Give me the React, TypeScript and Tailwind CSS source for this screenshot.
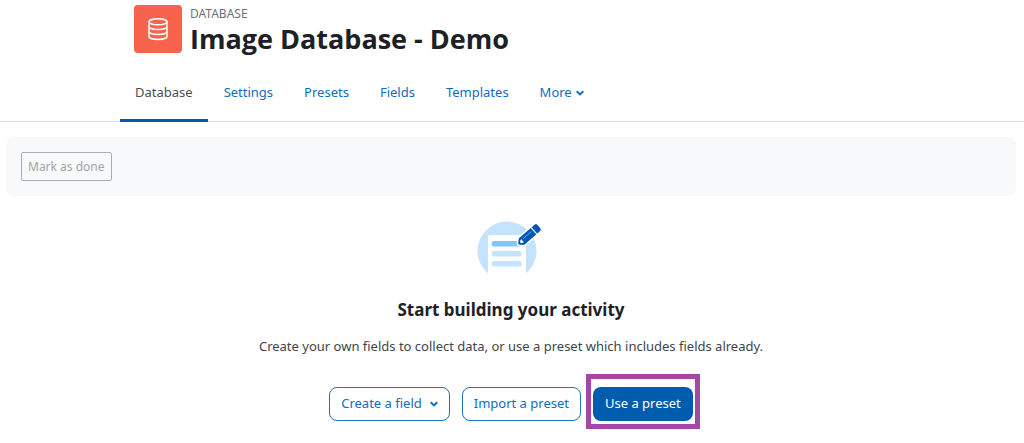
import { clsx } from "clsx";

const tabs = ["Database", "Settings", "Presets", "Fields", "Templates"];

function Caret() {
  return (
    <svg className="h-2 w-2" viewBox="0 0 8 8" fill="none" aria-hidden="true">
      <path d="M0.7 2.3 4 5.4 7.3 2.3" stroke="currentColor" strokeWidth="2" />
    </svg>
  );
}

function DatabaseIcon() {
  return (
    <svg
      className="h-6 w-6"
      viewBox="0 0 24 24"
      fill="none"
      stroke="currentColor"
      strokeWidth="1.5"
      aria-hidden="true"
    >
      <ellipse cx="12" cy="4.8" rx="9" ry="3" />
      <path d="M3 4.8v14.6c0 1.7 4 3 9 3s9-1.3 9-3V4.8" />
      <path d="M3 9.6c0 1.7 4 3 9 3s9-1.3 9-3M3 14.5c0 1.7 4 3 9 3s9-1.3 9-3" />
    </svg>
  );
}

function EmptyStateImage() {
  return (
    <svg className="h-15 w-18" viewBox="0 0 72 60" aria-hidden="true">
      <circle cx="32" cy="31" r="29.5" fill="#c3e3ff" />
      <path d="M13 17a2 2 0 0 1 2-2H49a2 2 0 0 1 2 2V60H13Z" fill="#fff" />
      <rect x="16.5" y="21" width="30" height="5.6" rx="2.8" fill="#82c6ff" />
      <rect x="16.5" y="31" width="30" height="5.6" rx="2.8" fill="#c3e3ff" />
      <rect x="16.5" y="41" width="30" height="5.6" rx="2.8" fill="#c3e3ff" />
      <g transform="translate(43.5 24.3) rotate(-41)">
        <path
          d="M0 0 0.6-1.2 4.2-4.2H25a2 2 0 0 1 2 2V2.2a2 2 0 0 1-2 2H4.2L0.6 1.2Z"
          fill="#0056b3"
          stroke="#fff"
          strokeWidth="3"
          paintOrder="stroke"
          strokeLinejoin="round"
        />
        <path d="M20.5-4.4V4.4" stroke="#fff" strokeWidth="1.1" />
        <path d="M7-1.2H18" stroke="#82b6e8" strokeWidth="0.8" />
        <path d="M2.6-0.9 5.4-2.3V2.1L2.6 0.9Z" fill="#fff" />
      </g>
    </svg>
  );
}

export default function App() {
  const outlineButton =
    "flex h-[34px] items-center rounded-lg border border-[#1f73bc] px-[11px] text-[#0f6cbf]";

  return (
    <div className="bg-white pb-5 font-['Noto_Sans','Open_Sans',sans-serif] text-[13px] text-[#1d2125]">
      {/* Activity header */}
      <header className="border-b border-[#dee2e6]">
        <div className="px-[120px]">
          <div className="flex items-start gap-2 px-[14px] pt-[5px]">
            <div className="flex h-12 w-12 items-center justify-center rounded bg-[#f7634d] text-white">
              <DatabaseIcon />
            </div>
            <div>
              <p className="text-xs leading-[18px] text-[#6a737b]">DATABASE</p>
              <h1 className="font-['Open_Sans',sans-serif] text-[27px] leading-8 font-bold">
                Image Database - Demo
              </h1>
            </div>
          </div>

          <nav className="-mb-px mt-3 flex gap-px">
            {tabs.map((tab, i) => (
              <a
                key={tab}
                href="#"
                className={clsx(
                  "flex h-[55px] items-center border-b-3 px-[15px]",
                  i === 0 ? "border-[#005cad] text-[#495057]" : "border-transparent text-[#0f6cbf]",
                )}
              >
                {tab}
              </a>
            ))}
            <button className="flex h-[55px] items-center gap-1 border-b-3 border-transparent px-[15px] text-[#0f6cbf]">
              More
              <Caret />
            </button>
          </nav>
        </div>
      </header>

      <main className="mt-[15px] mr-2 ml-[6px]">
        {/* Completion */}
        <div className="rounded-lg bg-[#f8f9fb] px-[15px] py-[15px]">
          <button
            disabled
            className="block h-[29px] rounded-xs border border-[#a9adb1] px-[6px] text-xs text-[#a0a5aa]"
          >
            Mark as done
          </button>
        </div>

        {/* Empty state */}
        <section className="mt-6 flex flex-col items-center">
          <EmptyStateImage />
          <h2 className="mt-[18px] text-[17px] leading-6 font-bold">Start building your activity</h2>
          <p className="mt-3 leading-6 text-[#40454a]">
            Create your own fields to collect data, or use a preset which includes fields already.
          </p>
          <div className="mt-[29px] flex gap-3">
            <button className={clsx(outlineButton, "gap-2")}>
              Create a field
              <Caret />
            </button>
            <button className={outlineButton}>Import a preset</button>
            <div className="relative">
              <button className="flex h-[34px] items-center rounded-lg bg-[#005cad] px-3 text-white">
                Use a preset
              </button>
              <span className="pointer-events-none absolute -inset-x-[7px] -top-[13px] -bottom-2 border-5 border-[#a349a4]" />
            </div>
          </div>
        </section>
      </main>
    </div>
  );
}
